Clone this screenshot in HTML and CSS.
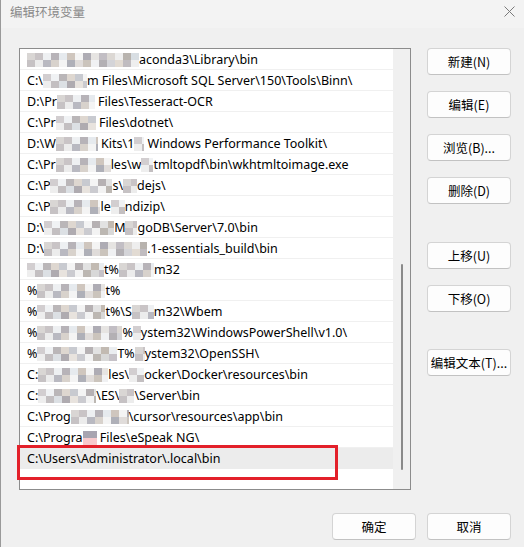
FILE: index.html
```html
<!DOCTYPE html>
<html lang="zh-CN">
<head>
  <meta charset="UTF-8">
  <title>编辑环境变量</title>
  <link rel="stylesheet" href="styles.css">
</head>
<body>
  <div class="window">
    <div class="titlebar">
      <span class="title">编辑环境变量</span>
      <svg class="close" width="11" height="11" viewBox="0 0 11 11">
        <path d="M0.5 0.5 L10.5 10.5 M10.5 0.5 L0.5 10.5" stroke="#7a7a7a" stroke-width="1" fill="none"/>
      </svg>
    </div>

    <div class="main">
      <div class="listbox">
        <ul class="paths">
          <li><span class="px w112"></span>aconda3\Library\bin</li>
          <li>C:\<span class="px w44 alt"></span>m Files\Microsoft SQL Server\150\Tools\Binn\</li>
          <li>D:\Pr<span class="px w38"></span> Files\Tesseract-OCR</li>
          <li>C:\Pr<span class="px w40 alt"></span> Files\dotnet\</li>
          <li>D:\W<span class="px w42"></span> Kits\1<span class="px w10 alt"></span> Windows Performance Toolkit\</li>
          <li>C:\Pr<span class="px w55"></span>les\w<span class="px w12 alt"></span>tmltopdf\bin\wkhtmltoimage.exe</li>
          <li>C:\P<span class="px w62 alt"></span>s\<span class="px w14"></span>dejs\</li>
          <li>C:\P<span class="px w50"></span>le<span class="px w14 alt"></span>ndizip\</li>
          <li>D:\<span class="px w70 alt"></span>M<span class="px w12"></span>goDB\Server\7.0\bin</li>
          <li>D:\<span class="px w103"></span>.1-essentials_build\bin</li>
          <li><span class="px w77 alt"></span>t%<span class="px w35"></span>m32</li>
          <li>%<span class="px w68"></span>t%</li>
          <li>%<span class="px w68 alt"></span>t%\S<span class="px w22"></span>m32\Wbem</li>
          <li>%<span class="px w85"></span>%<span class="px w8 alt"></span>ystem32\WindowsPowerShell\v1.0\</li>
          <li>%<span class="px w80 alt"></span>T%<span class="px w10"></span>ystem32\OpenSSH\</li>
          <li>C:<span class="px w70"></span>les\<span class="px w15 alt"></span>ocker\Docker\resources\bin</li>
          <li>C:<span class="px w58 alt"></span>\ES\<span class="px w15"></span>\Server\bin</li>
          <li>C:\Prog<span class="px w58"></span>\cursor\resources\app\bin</li>
          <li>C:\Progra<span class="px w14 pink"></span> Files\eSpeak NG\</li>
          <li class="selected">C:\Users\Administrator\.local\bin</li>
        </ul>
        <div class="scrollbar"><div class="thumb"></div></div>
        <div class="highlight"></div>
      </div>

      <div class="actions">
        <div class="group">
          <button>新建(N)</button>
          <button>编辑(E)</button>
          <button>浏览(B)...</button>
          <button>删除(D)</button>
        </div>
        <div class="group">
          <button>上移(U)</button>
          <button>下移(O)</button>
        </div>
        <div class="group">
          <button>编辑文本(T)...</button>
        </div>
      </div>
    </div>

    <div class="footer">
      <button>确定</button>
      <button>取消</button>
    </div>
  </div>
</body>
</html>
```

FILE: styles.css
```css
body {
  margin: 0;
  font-family: "Noto Sans", "Noto Sans CJK SC", sans-serif;
  font-size: 12.5px;
  color: #000;
  background: #f0f0f0;
}
.window {
  width: 524px;
  height: 547px;
  box-sizing: border-box;
  border-left: 1px solid #9a9a9a;
  background: #f0f0f0;
}
.titlebar {
  height: 28px;
  display: flex;
  align-items: center;
  justify-content: space-between;
  padding: 0 9px 6px 9px;
  box-sizing: border-box;
  background: #f3f3f3;
}
.title {
  color: #8a8a8a;
  font-size: 12.5px;
  font-family: "Noto Sans CJK SC", sans-serif;
}
.main {
  display: flex;
  padding: 20px 0 0 18px;
}
.listbox {
  position: relative;
  width: 392px;
  height: 442px;
  box-sizing: border-box;
  border: 1px solid #8c8c8c;
  background: #fff;
  display: flex;
}
.paths {
  list-style: none;
  margin: 0;
  padding: 0;
  width: 373px;
}
.paths li {
  height: 20px;
  line-height: 21px;
  border-bottom: 1px solid #f0f0f0;
  padding-left: 7px;
  white-space: nowrap;
  overflow: hidden;
}
.paths li.selected {
  background: #ececec;
  border-bottom-color: #ececec;
}
.scrollbar {
  flex: 1;
  background: #f0f0f0;
  position: relative;
  display: flex;
  justify-content: center;
  padding-top: 215px;
  padding-bottom: 18px;
}
.thumb {
  width: 2px;
  height: 206px;
  border-radius: 1px;
  background: #8a8a8a;
}
/* annotation frame around the last entry */
.highlight {
  position: absolute;
  left: -3px;
  top: 396px;
  width: 321px;
  height: 35px;
  box-sizing: border-box;
  border: 3px solid #e3202a;
}

/* pixelated blocks covering part of a path */
.px {
  display: inline-block;
  height: 14px;
  vertical-align: -3px;
  background:
    linear-gradient(90deg, #d9d6d4 0 8px, #c9c4c6 8px 16px, #eef0f2 16px 24px, #b7b3b8 24px 32px, #e6eaee 32px 40px, #cfc6be 40px 48px, #f4f4f4 48px 56px, #aeacb4 56px 64px, #e6e4e2 64px 72px, #c2bec4 72px 80px, #dcd8d4 80px 88px, #eeeeee 88px 96px, #b8b3ae 96px 104px, #d8dee3 104px 112px) top / 100% 50% no-repeat,
    linear-gradient(90deg, #c6c2c4 0 8px, #ececec 8px 16px, #b9b9c1 16px 24px, #d8d2cc 24px 32px, #f4f4f4 32px 40px, #afb0b8 40px 48px, #e0dcda 48px 56px, #cbc4bc 56px 64px, #f0f1f3 64px 72px, #b3b0b4 72px 80px, #d4d4d8 80px 88px, #e2dbd3 88px 96px, #c0bcc0 96px 104px, #eeeeee 104px 112px) bottom / 100% 50% no-repeat;
}
.px.alt {
  background:
    linear-gradient(90deg, #d2ced0 0 8px, #f0f2f4 8px 16px, #bab6b8 16px 24px, #ded7d0 24px 32px, #c8cad0 32px 40px, #f4f4f4 40px 48px, #b6b1b3 48px 56px, #e2e2e2 56px 64px, #c2bab2 64px 72px, #eaedf0 72px 80px, #b1aeb3 80px 88px) top / 100% 50% no-repeat,
    linear-gradient(90deg, #eeeeee 0 8px, #c3bfc1 8px 16px, #dce0e4 16px 24px, #afabb0 24px 32px, #e8e3de 32px 40px, #cbcbd0 40px 48px, #f3f3f3 48px 56px, #bcb7b2 56px 64px, #d8d8d8 64px 72px, #c6c2c8 72px 80px, #e8e8e8 80px 88px) bottom / 100% 50% no-repeat;
}
.px.pink {
  background: linear-gradient(180deg, #a8a4b0 0 7px, #f7c9cc 7px 14px);
}
.w8 { width: 8px; }
.w10 { width: 10px; }
.w12 { width: 12px; }
.w14 { width: 14px; }
.w15 { width: 15px; }
.w22 { width: 22px; }
.w35 { width: 35px; }
.w38 { width: 38px; }
.w40 { width: 40px; }
.w42 { width: 42px; }
.w44 { width: 44px; }
.w50 { width: 50px; }
.w55 { width: 55px; }
.w58 { width: 58px; }
.w62 { width: 62px; }
.w68 { width: 68px; }
.w70 { width: 70px; }
.w77 { width: 77px; }
.w80 { width: 80px; }
.w85 { width: 85px; }
.w103 { width: 103px; }
.w112 { width: 112px; }

.actions {
  display: flex;
  flex-direction: column;
  margin-left: 16px;
  width: 84px;
}
.group {
  display: flex;
  flex-direction: column;
  gap: 16px;
}
.group:first-child {
  margin-bottom: 38px;
}
.group:nth-child(2) {
  margin-bottom: 37px;
}
button {
  width: 84px;
  height: 27px;
  padding: 0;
  box-sizing: border-box;
  font-family: "Noto Sans CJK SC", sans-serif;
  font-size: 12.5px;
  color: #000;
  background: #fdfdfd;
  border: 1px solid #d4d4d4;
  border-bottom-color: #c2c2c2;
  border-radius: 4px;
}
.footer {
  display: flex;
  justify-content: flex-end;
  gap: 11px;
  padding: 23px 13px 0 0;
}
```
